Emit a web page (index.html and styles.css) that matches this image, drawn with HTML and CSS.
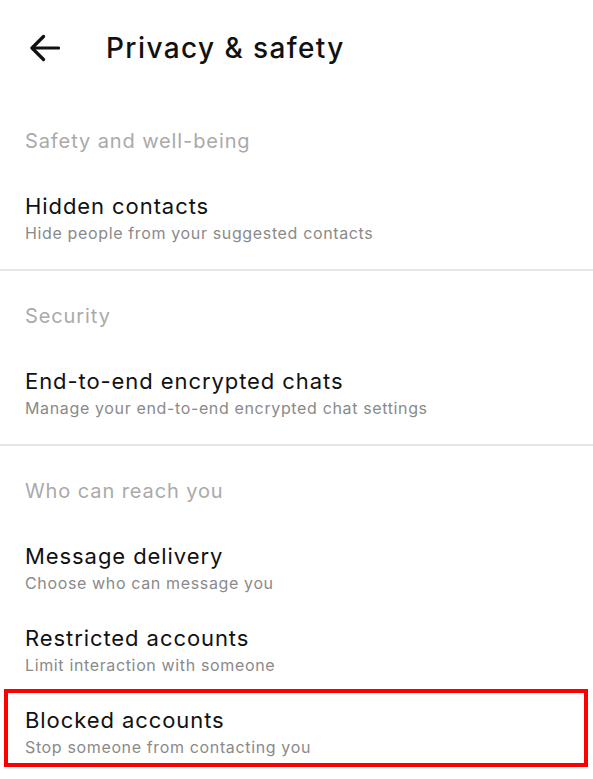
FILE: index.html
```html
<!DOCTYPE html>
<html lang="en">
<head>
  <meta charset="UTF-8" />
  <meta name="viewport" content="width=device-width, initial-scale=1.0"/>
  <title>Privacy &amp; safety</title>
  <link rel="stylesheet" href="styles.css">
</head>
<body>
  <div class="topbar">
    <svg class="back" width="30" height="28" viewBox="0 0 30 28" fill="none" stroke="#111" stroke-width="3.2" stroke-linecap="round" stroke-linejoin="round">
      <path d="M28.5 14H2.5"/>
      <path d="M13.5 2.5L2 14l11.5 11.5"/>
    </svg>
    <h1>Privacy &amp; safety</h1>
  </div>

  <div class="section">
    <div class="section-title">Safety and well-being</div>
    <div class="item">
      <div class="item-title">Hidden contacts</div>
      <div class="item-sub">Hide people from your suggested contacts</div>
    </div>
  </div>

  <div class="section">
    <div class="section-title">Security</div>
    <div class="item">
      <div class="item-title">End-to-end encrypted chats</div>
      <div class="item-sub">Manage your end-to-end encrypted chat settings</div>
    </div>
  </div>

  <div class="section last">
    <div class="section-title">Who can reach you</div>
    <div class="item">
      <div class="item-title">Message delivery</div>
      <div class="item-sub">Choose who can message you</div>
    </div>
    <div class="item">
      <div class="item-title">Restricted accounts</div>
      <div class="item-sub">Limit interaction with someone</div>
    </div>
    <div class="item highlight">
      <div class="item-title">Blocked accounts</div>
      <div class="item-sub">Stop someone from contacting you</div>
    </div>
  </div>
</body>
</html>
```

FILE: styles.css
```css
body {
  font-family: Inter, "Open Sans", sans-serif;
  letter-spacing: 0.04em;
  background-color: white;
  color: #111;
  margin: 0;
  overflow: hidden;
}

.topbar {
  height: 95px;
  display: flex;
  align-items: center;
  padding-left: 30px;
}

.back {
  display: block;
}

.topbar h1 {
  margin: 0 0 0 46px;
  font-size: 28px;
  font-weight: 500;
  letter-spacing: 0.05em;
}

.section {
  padding-bottom: 9px;
  border-bottom: 2px solid #e6e6e6;
}

.section.last {
  border-bottom: none;
}

.section-title {
  padding: 31px 25px 22px;
  line-height: 30px;
  font-size: 20px;
  color: #aaaaaa;
  letter-spacing: 0.045em;
}

.section + .section .section-title {
  padding-top: 30px;
}

.item {
  position: relative;
  height: 82px;
  box-sizing: border-box;
  padding: 13px 25px 0;
}

.item-title {
  font-size: 22px;
  line-height: 30px;
  color: #111;
  letter-spacing: 0.042em;
}

.item-sub {
  font-size: 16px;
  line-height: 24px;
  color: #8a8a8a;
}

.highlight::after {
  content: "";
  position: absolute;
  left: 4px;
  right: 5px;
  top: -3px;
  height: 78px;
  box-sizing: border-box;
  border: 4px solid #ff0000;
}
```
